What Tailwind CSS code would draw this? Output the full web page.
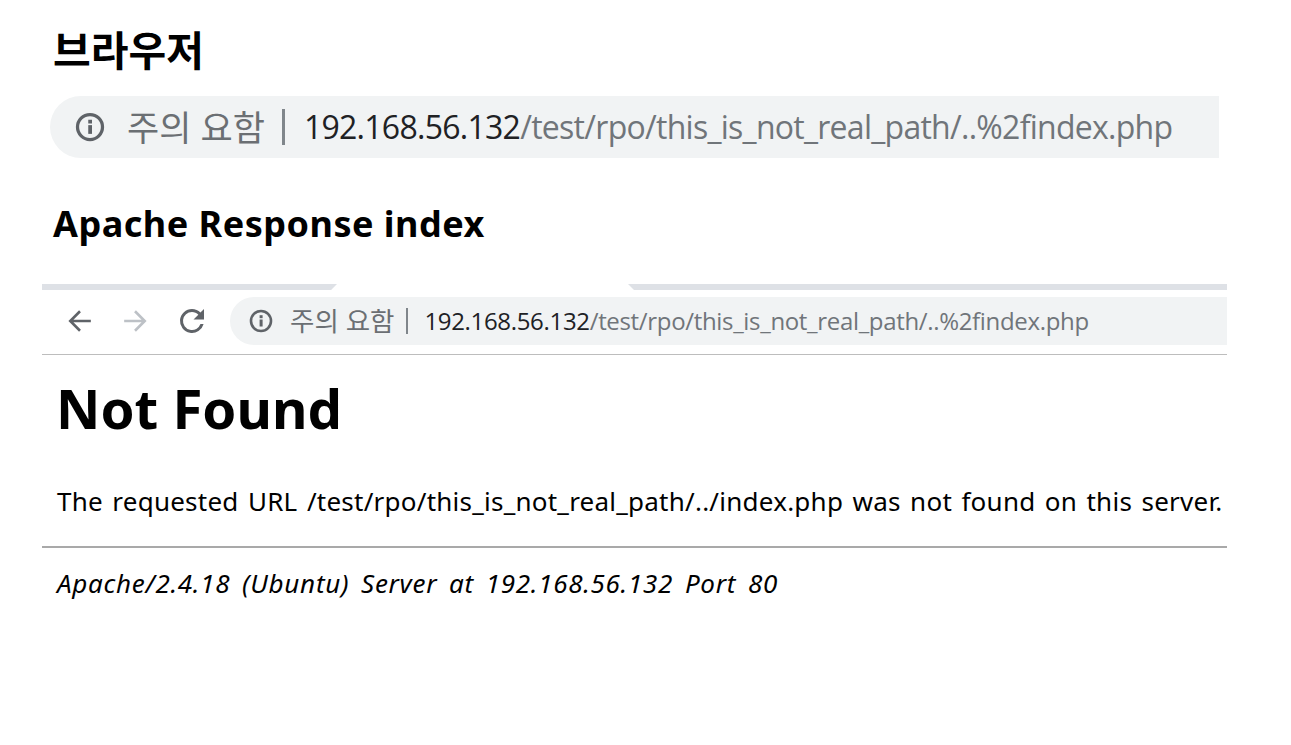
<!DOCTYPE html>
<html lang="ko">
<head>
    <meta charset="UTF-8">
    <title>Apache Response index</title>
    <script src="https://cdn.jsdelivr.net/npm/@tailwindcss/browser@4"></script>
</head>
<body class="bg-white text-black font-['Noto_Sans','Noto_Sans_CJK_KR',sans-serif] overflow-hidden">
    <div class="w-[1291px] h-[745px] pt-[26px]">
        <h2 class="ml-[53px] h-[48px] leading-[48px] text-[41px] font-bold">브라우저</h2>

        <div class="ml-[50px] mt-[22px] w-[1169px] h-[62px] bg-[#f1f3f4] rounded-l-[31px] flex items-center pl-[25px]">
            <svg class="w-[30px] h-[30px] text-[#5f6368]" viewBox="0 0 24 24" fill="none">
                <circle cx="12" cy="12" r="10" stroke="currentColor" stroke-width="2.6"/>
                <rect x="10.6" y="10.5" width="3" height="7" fill="currentColor"/>
                <rect x="10.6" y="6.2" width="3" height="3" fill="currentColor"/>
            </svg>
            <span class="ml-[22px] text-[35px] text-[#6b6f73] leading-none">주의 요함</span>
            <span class="ml-[17px] w-[3px] h-[36px] bg-[#80868b]"></span>
            <span class="ml-[19px] text-[32px] tracking-[-0.73px] leading-none font-['Open_Sans',sans-serif] text-[#70757a]"><span class="text-[#202124]">192.168.56.132</span>/test/rpo/this_is_not_real_path/..%2findex.php</span>
        </div>

        <h2 class="ml-[53px] mt-[42px] h-[48px] leading-[48px] text-[36px] tracking-[0.5px] font-bold">Apache Response index</h2>

        <div class="ml-[42px] mt-[36px] w-[1185px]">
            <div class="h-[6px] flex justify-between">
                <div class="w-[295px] bg-[#dee1e6] [clip-path:polygon(0_0,100%_0,98%_100%,0_100%)]"></div>
                <div class="w-[599px] bg-[#dee1e6] [clip-path:polygon(0_0,100%_0,100%_100%,1%_100%)]"></div>
            </div>
            <div class="h-[65px] border-b border-[#bdbdbd] flex items-start pt-[7px]">
                <div class="w-[188px] h-[48px] flex items-center pl-[25px] shrink-0">
                    <svg class="w-[26px] h-[26px] text-[#5f6368]" viewBox="0 0 24 24" fill="none" stroke="currentColor" stroke-width="2.4"><path d="M22 12H3M12 3l-9 9 9 9"/></svg>
                    <svg class="ml-[29px] w-[26px] h-[26px] text-[#bdc1c6]" viewBox="0 0 24 24" fill="none" stroke="currentColor" stroke-width="2.4"><path d="M2 12h19M12 3l9 9-9 9"/></svg>
                    <svg class="ml-[26px] w-[36px] h-[36px] text-[#5f6368]" viewBox="0 0 24 24"><path fill="currentColor" d="M17.65 6.35A7.96 7.96 0 0 0 12 4a8 8 0 1 0 7.73 10h-2.08A6 6 0 1 1 12 6c1.66 0 3.14.69 4.22 1.78L13 11h7V4l-2.35 2.35z"/></svg>
                </div>
                <div class="flex-1 h-[48px] bg-[#f1f3f4] rounded-l-[24px] flex items-center pl-[19px]">
                    <svg class="w-[24px] h-[24px] text-[#5f6368]" viewBox="0 0 24 24" fill="none">
                        <circle cx="12" cy="12" r="10" stroke="currentColor" stroke-width="2.6"/>
                        <rect x="10.6" y="10.5" width="3" height="7" fill="currentColor"/>
                        <rect x="10.6" y="6.2" width="3" height="3" fill="currentColor"/>
                    </svg>
                    <span class="ml-[17px] text-[26.5px] text-[#6b6f73] leading-none">주의 요함</span>
                    <span class="ml-[12px] w-[2px] h-[26px] bg-[#80868b]"></span>
                    <span class="ml-[16px] text-[24px] tracking-[-0.33px] leading-none font-['Open_Sans',sans-serif] text-[#70757a]"><span class="text-[#202124]">192.168.56.132</span>/test/rpo/this_is_not_real_path/..%2findex.php</span>
                </div>
            </div>

            <h1 class="ml-[14px] mt-[14px] h-[78px] leading-[78px] text-[54.6px] font-bold">Not Found</h1>
            <p class="ml-[15px] mt-[36px] h-[36px] leading-[36px] text-[26px] tracking-[0.24px] [word-spacing:2.4px] whitespace-nowrap">The requested URL /test/rpo/this_is_not_real_path/../index.php was not found on this server.</p>
            <div class="mt-[27px] h-[2px] bg-[#a9a9a9]"></div>
            <p class="ml-[15px] mt-[17px] h-[36px] leading-[36px] text-[26px] italic tracking-[0.7px] [word-spacing:4.4px] whitespace-nowrap">Apache/2.4.18 (Ubuntu) Server at 192.168.56.132 Port 80</p>
        </div>
    </div>
</body>
</html>
